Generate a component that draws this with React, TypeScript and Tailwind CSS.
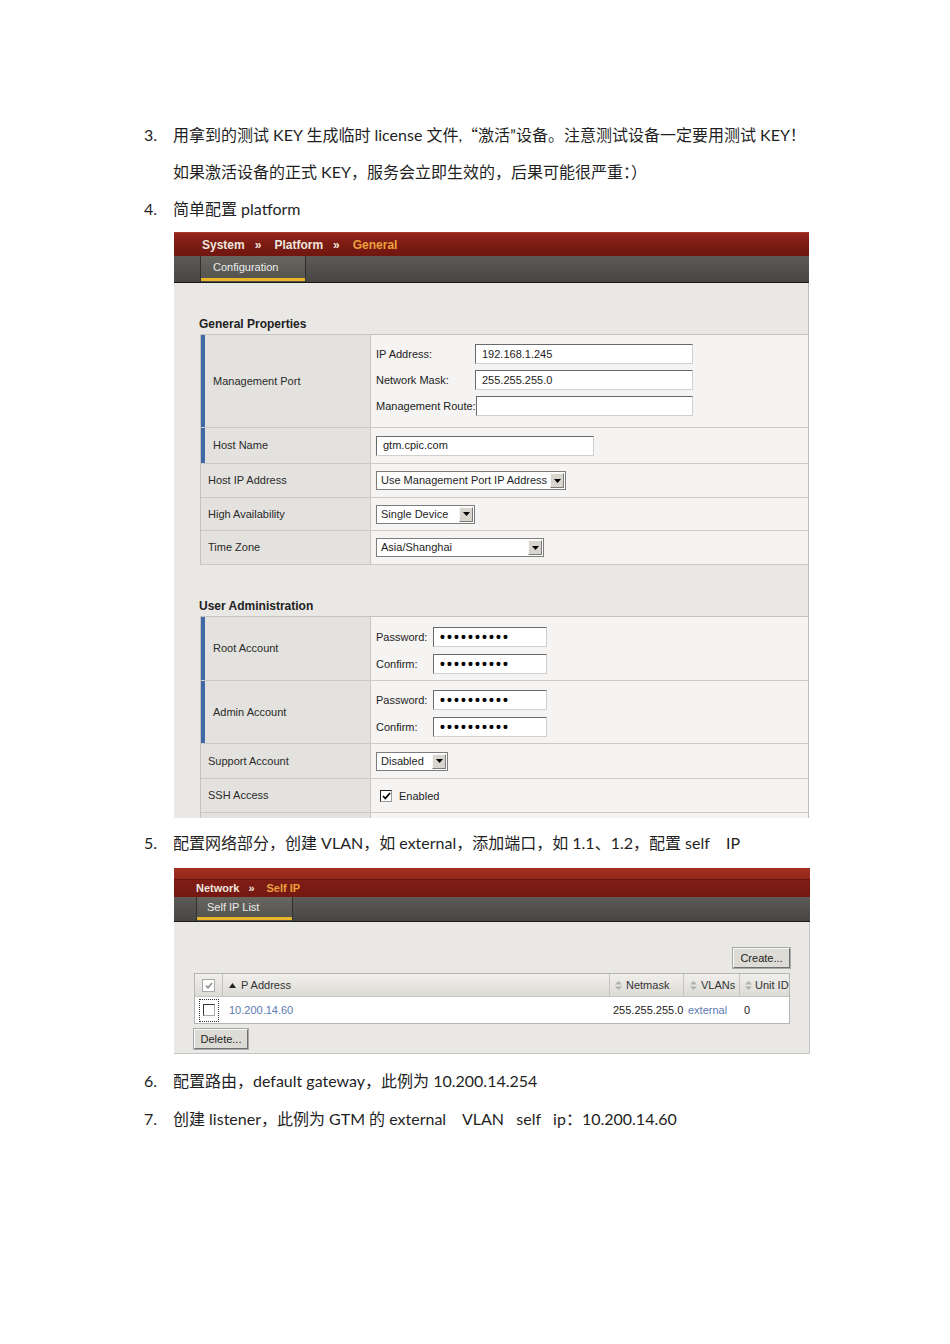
import React from "react";

const DOC = "font-['Lato','Noto_Sans_CJK_SC',sans-serif] text-[16px] text-[#1f1f1f]";
const UI = "font-['Liberation_Sans',Arial,sans-serif]";
const CJK = "font-['Noto_Sans_CJK_SC',sans-serif]";

function Line({ num, h, children }: { num: string; h: string; children: React.ReactNode }) {
  return (
    <div className={`${h} flex items-center whitespace-pre ${DOC}`}>
      <span className="ml-[144px] w-[29px] shrink-0">{num}</span>
      <span>{children}</span>
    </div>
  );
}

function Tri() {
  return (
    <svg width="7" height="4" viewBox="0 0 7 4">
      <path d="M0 0h7L3.5 4z" fill="#000" />
    </svg>
  );
}

function SortIcon() {
  return (
    <svg width="7" height="9" viewBox="0 0 7 9" className="shrink-0">
      <path d="M3.5 0L7 3.5H0z" fill="#b0b0b0" />
      <path d="M0 5.5h7L3.5 9z" fill="#b0b0b0" />
    </svg>
  );
}

function SelectBox({ w, text }: { w: string; text: string }) {
  return (
    <div
      className={`${w} h-[19px] bg-white border border-[#7d7d7d] flex items-center justify-between pl-[4px] pr-[1px] text-[11px] text-[#1e1e1e]`}
    >
      <span className="whitespace-nowrap leading-none">{text}</span>
      <span className="w-[14px] h-[15px] bg-[#d8d5ce] border border-t-[#f6f6f6] border-l-[#f6f6f6] border-b-[#7a7a7a] border-r-[#7a7a7a] flex items-center justify-center">
        <Tri />
      </span>
    </div>
  );
}

function TextBox({ w, children }: { w: string; children?: React.ReactNode }) {
  return (
    <div
      className={`${w} h-[20px] bg-white border border-[#d0d0d0] border-t-[#6a6a6a] border-l-[#6a6a6a] flex items-center pl-[6px] text-[11px] text-[#222] whitespace-nowrap`}
    >
      {children}
    </div>
  );
}

function Dots() {
  return <span className="text-[14px] font-bold tracking-[2.1px] leading-none text-black">••••••••••</span>;
}

function Label({ blue, children }: { blue?: boolean; children?: React.ReactNode }) {
  return (
    <div
      className={`w-[170px] shrink-0 bg-[#e3e2de] border-r border-[#c6c5c1] flex items-center text-[11px] text-[#2a2a2a] whitespace-nowrap ${
        blue ? "border-l-4 border-l-[#3e6aa6] pl-[8px]" : "pl-[7px]"
      }`}
    >
      {children}
    </div>
  );
}

function Row({ h, children }: { h: string; children: React.ReactNode }) {
  return <div className={`${h} flex border-b border-[#cbcac6]`}>{children}</div>;
}

function Value({ children, className = "" }: { children?: React.ReactNode; className?: string }) {
  return <div className={`flex-1 bg-[#f5f4f2] pl-[5px] text-[11px] text-[#222] ${className}`}>{children}</div>;
}

function Heading({ children }: { children: React.ReactNode }) {
  return (
    <div className="h-[51px] flex items-end pb-[3px] pl-[25px] font-bold text-[12px] leading-[14px] text-[#222]">
      {children}
    </div>
  );
}

function PwPair({ pt }: { pt: string }) {
  return (
    <div className={`flex flex-col gap-[7px] ${pt}`}>
      <div className="flex items-center">
        <span className="w-[57px]">Password:</span>
        <TextBox w="w-[114px]">
          <Dots />
        </TextBox>
      </div>
      <div className="flex items-center">
        <span className="w-[57px]">Confirm:</span>
        <TextBox w="w-[114px]">
          <Dots />
        </TextBox>
      </div>
    </div>
  );
}

function Button({ w, children }: { w: string; children: React.ReactNode }) {
  return (
    <div
      className={`${w} h-[20px] bg-[#dddbd5] border border-[#f7f7f7] border-b-[#6f6f6f] border-r-[#6f6f6f] shadow-[0_0_0_1px_#a9a9a9] flex items-center justify-center text-[11px] text-[#222]`}
    >
      {children}
    </div>
  );
}

function Screenshot1() {
  return (
    <div className={`ml-[174px] w-[635px] h-[586px] overflow-hidden flex flex-col ${UI}`}>
      <div className="h-[24px] shrink-0 bg-linear-to-b from-[#93261c] via-[#7b1b13] to-[#6f1710] border-t border-[#a83a2c] flex items-center pl-[28px] text-[12px] font-bold text-[#efe6df]">
        <span>System</span>
        <span className="ml-[10px]">»</span>
        <span className="ml-[13px]">Platform</span>
        <span className="ml-[10px]">»</span>
        <span className="ml-[13px] text-[#eda03c]">General</span>
      </div>
      <div className="h-[27px] shrink-0 bg-linear-to-b from-[#5c5b57] to-[#474643] border-b border-[#1a1a1a] flex">
        <div className="ml-[26px] w-[106px] bg-linear-to-b from-[#67665f] to-[#52514d] border-x border-[#2f2f2d] flex flex-col">
          <div className="flex-1 flex items-center pl-[12px] text-[11px] text-[#ececec]">Configuration</div>
          <div className="h-[3px] bg-[#e8b628] mb-[1px]" />
        </div>
      </div>
      <div className="flex-1 bg-[#e9e8e4] border-r border-[#bdbdbd]">
        <Heading>General Properties</Heading>
        <div className="ml-[26px] border-t border-l border-[#c4c3bf]">
          <Row h="h-[93px]">
            <Label blue>Management Port</Label>
            <Value>
              <div className="flex flex-col gap-[6px] pt-[9px]">
                <div className="flex items-center">
                  <span className="w-[99px]">IP Address:</span>
                  <TextBox w="w-[218px]">192.168.1.245</TextBox>
                </div>
                <div className="flex items-center">
                  <span className="w-[99px]">Network Mask:</span>
                  <TextBox w="w-[218px]">255.255.255.0</TextBox>
                </div>
                <div className="flex items-center">
                  <span className="w-[100px] whitespace-nowrap">Management Route:</span>
                  <TextBox w="w-[217px]" />
                </div>
              </div>
            </Value>
          </Row>
          <Row h="h-[36px]">
            <Label blue>Host Name</Label>
            <Value className="flex items-center">
              <TextBox w="w-[218px]">gtm.cpic.com</TextBox>
            </Value>
          </Row>
          <Row h="h-[34px]">
            <Label>Host IP Address</Label>
            <Value className="flex items-center">
              <SelectBox w="w-[190px]" text="Use Management Port IP Address" />
            </Value>
          </Row>
          <Row h="h-[33px]">
            <Label>High Availability</Label>
            <Value className="flex items-center">
              <SelectBox w="w-[99px]" text="Single Device" />
            </Value>
          </Row>
          <Row h="h-[34px]">
            <Label>Time Zone</Label>
            <Value className="flex items-center">
              <SelectBox w="w-[168px]" text="Asia/Shanghai" />
            </Value>
          </Row>
        </div>
        <Heading>User Administration</Heading>
        <div className="ml-[26px] border-t border-l border-[#c4c3bf]">
          <Row h="h-[64px]">
            <Label blue>Root Account</Label>
            <Value>
              <PwPair pt="pt-[10px]" />
            </Value>
          </Row>
          <Row h="h-[63px]">
            <Label blue>Admin Account</Label>
            <Value>
              <PwPair pt="pt-[9px]" />
            </Value>
          </Row>
          <Row h="h-[35px]">
            <Label>Support Account</Label>
            <Value className="flex items-center">
              <SelectBox w="w-[72px]" text="Disabled" />
            </Value>
          </Row>
          <Row h="h-[34px]">
            <Label>SSH Access</Label>
            <Value className="flex items-center">
              <span className="ml-[4px] w-[12px] h-[12px] bg-white border border-[#222] border-b-[#999] border-r-[#999] flex items-center justify-center">
                <svg width="9" height="8" viewBox="0 0 9 8">
                  <path d="M1 4l2.3 2.5L8 1" fill="none" stroke="#000" strokeWidth="1.8" />
                </svg>
              </span>
              <span className="ml-[7px] mt-[2px]">Enabled</span>
            </Value>
          </Row>
          <Row h="h-[34px]">
            <Label />
            <Value />
          </Row>
        </div>
      </div>
    </div>
  );
}

function Screenshot2() {
  return (
    <div className={`ml-[174px] w-[636px] h-[186px] overflow-hidden flex flex-col ${UI}`}>
      <div className="h-[11px] shrink-0 bg-linear-to-b from-[#a33020] to-[#93281b]" />
      <div className="h-[18px] shrink-0 bg-linear-to-b from-[#7f1d15] to-[#741812] border-t border-[#6a1610] flex items-center pl-[22px] text-[11px] font-bold text-[#efe6df]">
        <span>Network</span>
        <span className="ml-[9px]">»</span>
        <span className="ml-[12px] text-[#eda03c]">Self IP</span>
      </div>
      <div className="h-[25px] shrink-0 bg-linear-to-b from-[#5c5b57] to-[#474643] border-b border-[#1a1a1a] flex">
        <div className="ml-[22px] w-[97px] bg-linear-to-b from-[#67665f] to-[#52514d] border-x border-[#2f2f2d] flex flex-col">
          <div className="flex-1 flex items-center pl-[10px] text-[11px] text-[#ececec]">Self IP List</div>
          <div className="h-[3px] bg-[#e8b628] mb-[1px]" />
        </div>
      </div>
      <div className="flex-1 bg-[#e9e8e4] border-r border-b border-[#c4c4c4] flex flex-col">
        <div className="pt-[26px] pr-[19px] flex justify-end">
          <Button w="w-[57px]">Create...</Button>
        </div>
        <div className="mt-[5px] ml-[20px] mr-[19px] border border-[#b5b5b5] bg-white text-[11px]">
          <div className="h-[23px] flex bg-linear-to-b from-[#f0efeb] to-[#dcdbd6] border-b border-[#c4c4c4] text-[#333]">
            <div className="w-[28px] border-r border-[#c4c4c4] flex items-center justify-center">
              <span className="w-[13px] h-[13px] bg-white border border-[#a8a8a8] flex items-center justify-center">
                <svg width="8" height="7" viewBox="0 0 8 7">
                  <path d="M1 3.5l2 2.3L7 1" fill="none" stroke="#8a8a8a" strokeWidth="1.4" />
                </svg>
              </span>
            </div>
            <div className="flex-1 border-r border-[#c4c4c4] flex items-center pl-[6px] gap-[5px]">
              <svg width="7" height="5" viewBox="0 0 7 5">
                <path d="M3.5 0L7 5H0z" fill="#222" />
              </svg>
              <span>P Address</span>
            </div>
            <div className="w-[74px] border-r border-[#c4c4c4] flex items-center pl-[5px] gap-[4px]">
              <SortIcon />
              <span>Netmask</span>
            </div>
            <div className="w-[56px] border-r border-[#c4c4c4] flex items-center pl-[6px] gap-[4px]">
              <SortIcon />
              <span>VLANs</span>
            </div>
            <div className="w-[49px] flex items-center pl-[5px] gap-[3px] whitespace-nowrap">
              <SortIcon />
              <span>Unit ID</span>
            </div>
          </div>
          <div className="h-[26px] flex items-center">
            <div className="w-[28px] h-full border-r border-transparent flex items-center justify-center">
              <span className="w-[20px] h-[23px] border border-dotted border-[#333] flex items-center justify-center">
                <span className="w-[12px] h-[12px] bg-white border border-[#333] border-b-[#aaa] border-r-[#aaa]" />
              </span>
            </div>
            <div className="flex-1 pl-[6px] text-[#5b7bb3]">10.200.14.60</div>
            <div className="w-[74px] pl-[3px] text-[#222] whitespace-nowrap">255.255.255.0</div>
            <div className="w-[56px] pl-[4px] text-[#5b7bb3]">external</div>
            <div className="w-[49px] pl-[4px] text-[#222]">0</div>
          </div>
        </div>
        <div className="mt-[5px] ml-[20px]">
          <Button w="w-[54px]">Delete...</Button>
        </div>
      </div>
    </div>
  );
}

export default function App() {
  return (
    <div className="w-[950px] h-[1344px] bg-white overflow-hidden">
      <div className="pt-[116px]">
        <Line num="3." h="h-[37px]">
          用拿到的测试 KEY 生成临时 license 文件,<span className={CJK}>“</span>激活”设备。注意测试设备一定要用测试 KEY！
        </Line>
        <Line num="" h="h-[37px]">
          如果激活设备的正式 KEY，服务会立即生效的，后果可能很严重：）
        </Line>
        <Line num="4." h="h-[38px]">
          简单配置 platform
        </Line>
      </div>
      <div className="mt-[4px]">
        <Screenshot1 />
      </div>
      <Line num="5." h="h-[50px]">
        配置网络部分，创建 VLAN，如 external，添加端口，如 1.1、1.2，配置 self    IP
      </Line>
      <Screenshot2 />
      <div className="mt-[8px]">
        <Line num="6." h="h-[38px]">
          配置路由，default gateway，此例为 10.200.14.254
        </Line>
        <Line num="7." h="h-[37px]">
          创建 listener，此例为 GTM 的 external    VLAN   self   ip：10.200.14.60
        </Line>
      </div>
    </div>
  );
}
